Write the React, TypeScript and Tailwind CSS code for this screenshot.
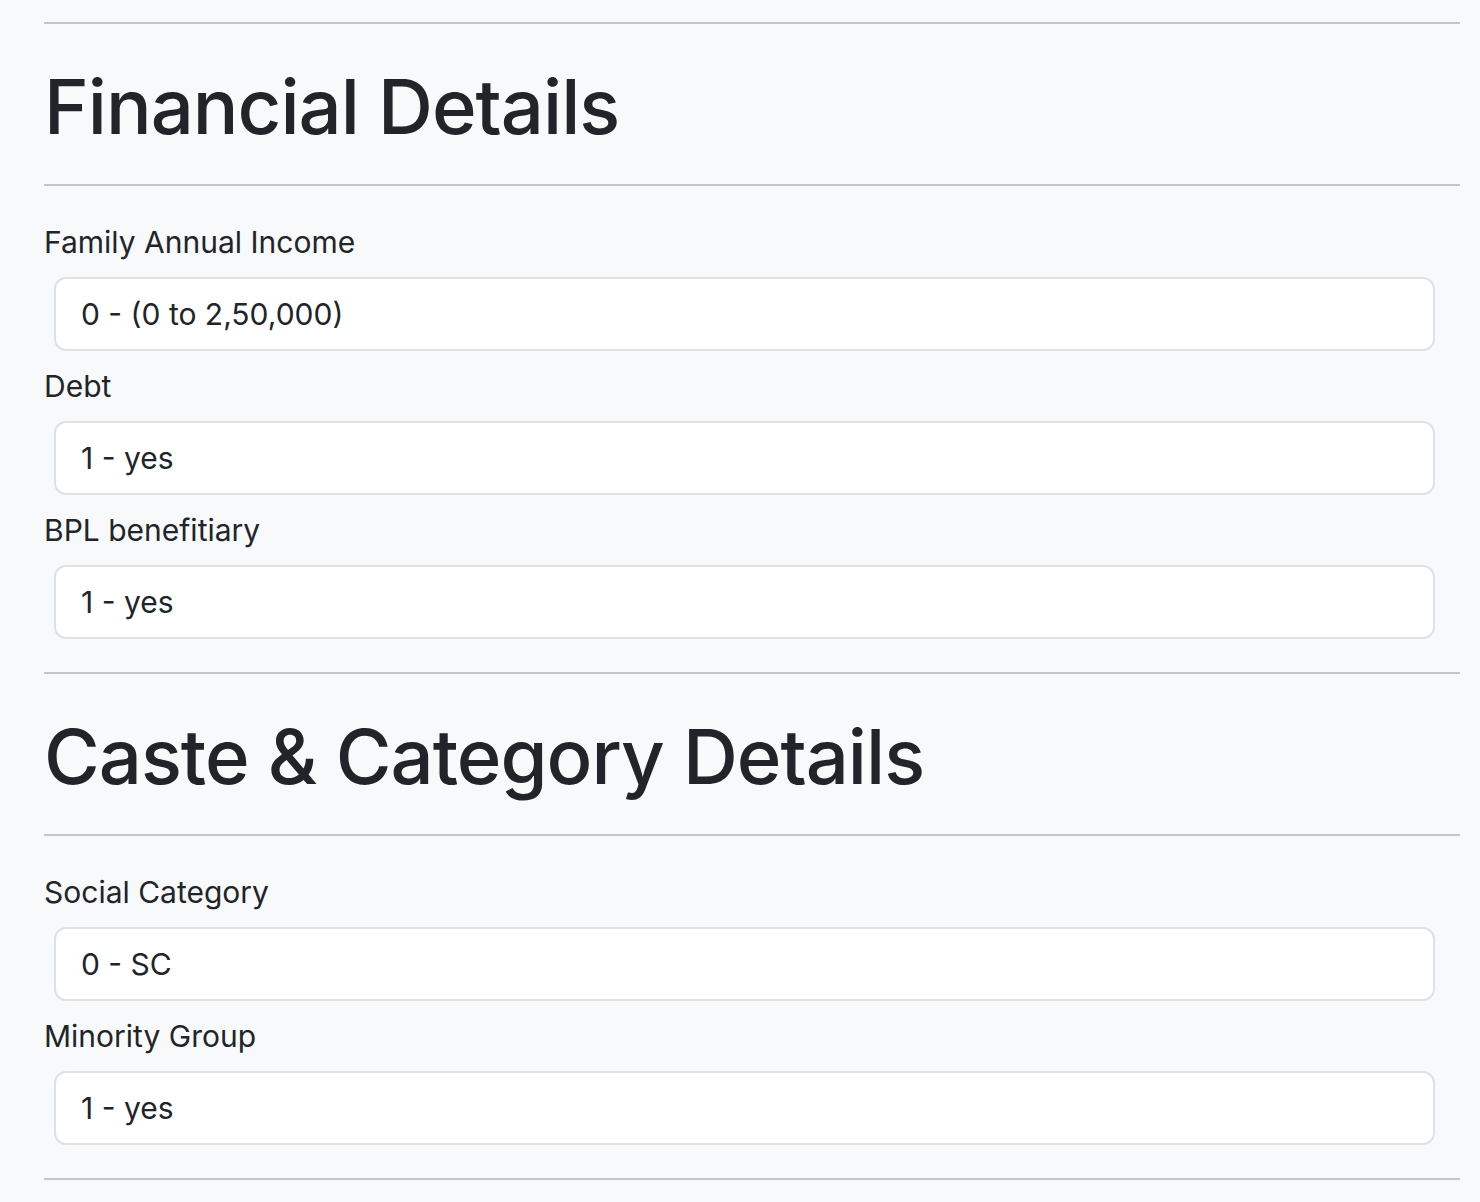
const sections = [
  {
    title: "Financial Details",
    fields: [
      { label: "Family Annual Income", value: "0 - (0 to 2,50,000)" },
      { label: "Debt", value: "1 - yes" },
      { label: "BPL benefitiary", value: "1 - yes" },
    ],
  },
  {
    title: "Caste & Category Details",
    fields: [
      { label: "Social Category", value: "0 - SC" },
      { label: "Minority Group", value: "1 - yes" },
    ],
  },
];

function Rule() {
  return <div className="h-[2px] w-full bg-[#c4c5c7]" />;
}

export default function App() {
  return (
    <div
      className="min-h-[1202px] bg-[#f8f9fa] pl-[44px] pr-[20px] pt-[22px] text-[#212529]"
      style={{ fontFamily: "Inter, 'Noto Sans', sans-serif" }}
    >
      {sections.map((s) => (
        <section key={s.title}>
          <Rule />
          <h1 className="mb-[30px] mt-[34px] text-[76px] font-medium leading-[96px] tracking-[-1px]">{s.title}</h1>
          <Rule />
          <div className="pb-[22px] pt-[32px]">
            {s.fields.map((f) => (
              <div key={f.label} className="mb-[11px]">
                <label className="mb-[11px] block text-[30px] leading-[48px]">{f.label}</label>
                <div className="ml-[10px] flex h-[74px] w-[1381px] items-center rounded-[12px] border-2 border-[#dee2e6] bg-white px-[25px] text-[30px]">
                  {f.value}
                </div>
              </div>
            ))}
          </div>
        </section>
      ))}
      <Rule />
    </div>
  );
}
